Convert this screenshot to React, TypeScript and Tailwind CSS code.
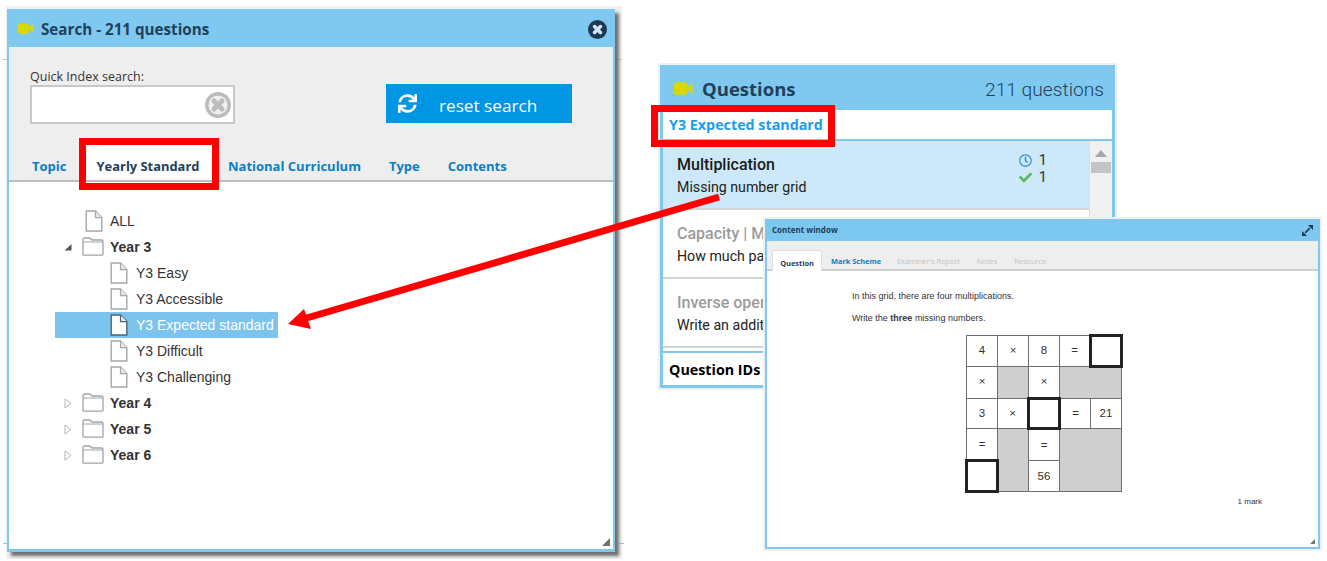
import React from "react";
import { FaSync, FaRegClock, FaCheck } from "react-icons/fa";

const OS = "font-['Open_Sans',sans-serif]";
const RB = "font-['Roboto',sans-serif]";
const LS = "font-['Liberation_Sans',Arial,sans-serif]";

function Camera({ className }: { className: string }) {
  return (
    <svg viewBox="0 0 18 12" className={className} aria-hidden="true">
      <rect x="0" y="0" width="12.5" height="12" rx="2.5" fill="#d9d900" />
      <path d="M13.4 4.6 17.6 0.8V11.2L13.4 7.4Z" fill="#d9d900" />
    </svg>
  );
}

function CircleX({ size, ring, fill, mark }: { size: number; ring: string; fill: string; mark: string }) {
  return (
    <svg width={size} height={size} viewBox="0 0 26 26" aria-hidden="true">
      <circle cx="13" cy="13" r="13" fill={ring} />
      <circle cx="13" cy="13" r="9.5" fill={fill} />
      <path d="M9 9 17 17M17 9 9 17" stroke={mark} strokeWidth="5" strokeLinecap="round" />
    </svg>
  );
}

function FileIcon({ selected = false }: { selected?: boolean }) {
  const c = selected ? "#4d6478" : "#a4a8ac";
  return (
    <svg width="18" height="22" viewBox="0 0 18 22" aria-hidden="true" className="shrink-0">
      <path d="M1.2 1H10.5L16.8 7.6V21H1.2Z" fill="#ffffff" stroke={c} strokeWidth="1.4" />
      <path d="M10.5 1V7.6H16.8" fill="#e8e8e8" stroke={c} strokeWidth="1.2" />
    </svg>
  );
}

function FolderIcon() {
  return (
    <svg width="22" height="19" viewBox="0 0 22 19" aria-hidden="true" className="shrink-0">
      <path d="M1 17.2V2.4Q1 1 2.4 1H8L10 3H19.6Q21 3 21 4.4V17.2Q21 18.2 20 18.2H2Q1 18.2 1 17.2Z" fill="#fff" stroke="#a0a4a8" strokeWidth="1.3" />
      <path d="M1 5H21" stroke="#a0a4a8" strokeWidth="1" />
    </svg>
  );
}

function Grip({ className }: { className: string }) {
  return (
    <svg viewBox="0 0 8 8" className={className} aria-hidden="true">
      <path d="M8 0V8H0Z" fill="#707070" />
    </svg>
  );
}

type Row = { label: string; bold?: boolean; indent: number; arrow?: "open" | "closed"; selected?: boolean };

function TreeRow({ label, bold, indent, selected }: Row) {
  const pad = indent === 0 ? "pl-[30px]" : "pl-[55px]";
  return (
    <div className={`flex h-[26px] items-center ${pad} pr-[4px] ${selected ? "bg-[#7cc4ee] text-white" : "text-[#333333]"} ${bold ? "font-bold text-[#222222]" : ""}`}>
      {bold ? (
        <span className="-ml-[3px] mr-[6px] -mt-[1px]"><FolderIcon /></span>
      ) : (
        <span className={indent === 0 ? "mr-[7px]" : "mr-[8px]"}><FileIcon selected={selected} /></span>
      )}
      <span className={`${LS} text-[14px] leading-none whitespace-nowrap`}>{label}</span>
    </div>
  );
}

function SearchWindow() {
  const tree: Row[] = [
    { label: "ALL", indent: 0 },
    { label: "Year 3", bold: true, indent: 0, arrow: "open" },
    { label: "Y3 Easy", indent: 1 },
    { label: "Y3 Accessible", indent: 1 },
    { label: "Y3 Expected standard", indent: 1, selected: true },
    { label: "Y3 Difficult", indent: 1 },
    { label: "Y3 Challenging", indent: 1 },
    { label: "Year 4", bold: true, indent: 0, arrow: "closed" },
    { label: "Year 5", bold: true, indent: 0, arrow: "closed" },
    { label: "Year 6", bold: true, indent: 0, arrow: "closed" },
  ];
  return (
    <div className={`absolute left-[7px] top-[9px] w-[608px] h-[543px] flex flex-col bg-white border-x-[2px] border-b-[3px] border-[#7fc8f0] shadow-[4px_4px_3px_#707070] ${OS}`}>
      <div className="-mx-[2px] h-[38px] shrink-0 bg-[#7fc9f0] flex items-center pl-[11px] pr-[8px]">
        <Camera className="w-[16px] h-[11px] mr-[7px]" />
        <span className="text-[15.2px] font-bold text-[#22405a] leading-none pt-[3px]">Search - 211 questions</span>
        <span className="ml-auto mt-[3px] flex"><CircleX size={19} ring="#1f3a55" fill="#1f3a55" mark="#cfe6f4" /></span>
      </div>
      <div className="h-[135px] shrink-0 bg-[#eeeeee] border-b-[2px] border-[#bdbdbd] relative flex flex-col">
        <div className="flex pl-[21px] pt-[21px]">
          <div className="w-[205px]">
            <div className="text-[12.5px] text-[#333333] leading-[17px] h-[17px]">Quick Index search:</div>
            <div className="h-[39px] bg-white border-[2px] border-[#c8c8c8] flex items-center justify-end pr-[2px]">
              <CircleX size={26} ring="#bcbcbc" fill="#f0f0f0" mark="#bcbcbc" />
            </div>
          </div>
          <div className="ml-[151px] mt-[16px] w-[186px] h-[39px] bg-[#0096e4] flex items-center text-white">
            <FaSync className="ml-[12px] text-[19px]" />
            <span className="ml-[22px] text-[17.2px] leading-none pt-[4px]">reset search</span>
          </div>
        </div>
        <div className="mt-auto flex items-end text-[13px] font-bold text-[#0a7fc4] pl-[23px] h-[36px]">
          <div className="h-[36px] flex items-center pt-[9px] w-[54px]">Topic</div>
          <div className="h-[36px] w-[126px] bg-white flex items-center justify-center pt-[9px] pr-[2px] text-[12.9px] text-[#22405a]">Yearly Standard</div>
          <div className="h-[36px] flex items-center pt-[9px] ml-[16px]">National Curriculum</div>
          <div className="h-[36px] flex items-center pt-[9px] ml-[28px]">Type</div>
          <div className="h-[36px] flex items-center pt-[9px] ml-[28px]">Contents</div>
        </div>
      </div>
      <div className="flex-1 relative pl-[46px] pt-[26px]">
        {tree.map((r) => (
          <div key={r.label} className="relative flex items-center">
            {r.arrow === "open" ? (
              <span className="absolute left-[9px] top-[9px] flex">
                <svg width="8" height="8" viewBox="0 0 8 8" aria-hidden="true"><path d="M7.5 1V7.5H0.5Z" fill="#555" /></svg>
              </span>
            ) : null}
            {r.arrow === "closed" ? (
              <span className="absolute left-[9px] top-[8px] flex">
                <svg width="8" height="11" viewBox="0 0 8 11" aria-hidden="true"><path d="M1 1 7 5.5 1 10Z" fill="#fff" stroke="#b5b5b5" /></svg>
              </span>
            ) : null}
            <TreeRow {...r} />
          </div>
        ))}
        <Grip className="absolute right-[3px] bottom-[3px] w-[8px] h-[8px]" />
      </div>
    </div>
  );
}

function QRow({ title, sub, active }: { title: string; sub: string; active?: boolean }) {
  return (
    <div className={`h-[69px] border-b-[2px] border-[#d4d4d4] pl-[14px] pt-[14px] ${RB} ${active ? "bg-[#cce8f9]" : "bg-white"}`}>
      <div className="flex">
        <div>
          <div className={`text-[16px] leading-[20px] font-medium ${active ? "text-[#1a1a1a]" : "text-[#9a9a9a]"}`}>{title}</div>
          <div className="text-[14.2px] leading-[20px] mt-[2px] text-[#222222]">{sub}</div>
        </div>
        {active ? (
          <div className="ml-auto mr-[42px] text-[14.5px] leading-[17px] text-[#333333] -mt-[3px]">
            <div className="flex items-center gap-[7px]"><FaRegClock className="text-[#2f8fd0] text-[13px]" /><span>1</span></div>
            <div className="flex items-center gap-[7px]"><FaCheck className="text-[#5cb85c] text-[13px]" /><span>1</span></div>
          </div>
        ) : null}
      </div>
    </div>
  );
}

function QuestionsWindow() {
  return (
    <div className="absolute left-[660px] top-[65px] w-[455px] h-[323px] flex flex-col bg-white border-x-[3px] border-b-[3px] border-[#7fc8f0] shadow-[0_0_0_2px_#f0f0f0]">
      <div className="-mx-[3px] h-[45px] shrink-0 bg-[#7fc9f0] flex items-center pl-[14px] pr-[11px] pt-[4px]">
        <Camera className="w-[19px] h-[13px] mr-[9px] -mt-[3px]" />
        <span className={`${OS} text-[18.5px] font-bold text-[#22405a] leading-none`}>Questions</span>
        <span className={`${RB} ml-auto text-[19.2px] font-light text-[#22405a] leading-none`}>211 questions</span>
      </div>
      <div className={`${OS} h-[31px] shrink-0 flex items-center pl-[6px] text-[14.3px] font-bold text-[#1b9cec] border-b-[2px] border-[#7fc8f0]`}>Y3 Expected standard</div>
      <div className="flex flex-1 min-h-0">
        <div className="flex-1 overflow-hidden">
          <QRow active title="Multiplication" sub="Missing number grid" />
          <QRow title="Capacity | M" sub="How much pa" />
          <QRow title="Inverse oper" sub="Write an addit" />
        </div>
        <div className="w-[23px] shrink-0 bg-[#f0f0f0] border-l border-[#dddddd] flex flex-col items-center pt-[9px]">
          <svg width="12" height="7" viewBox="0 0 12 7" aria-hidden="true"><path d="M6 0 12 7H0Z" fill="#a8a8a8" /></svg>
          <div className="mt-[5px] w-[20px] h-[11px] bg-[#c4c4c4]" />
        </div>
      </div>
      <div className={`${OS} -mx-[3px] h-[34px] shrink-0 border-x-[3px] border-t-[2px] border-[#7fc8f0] pl-[6px] pt-[2px] flex items-center text-[14.3px] font-bold text-black`}>Question IDs</div>
    </div>
  );
}

function Cell({ children, bold, gray, rowSpan, colSpan }: { children?: React.ReactNode; bold?: boolean; gray?: boolean; rowSpan?: number; colSpan?: number }) {
  return (
    <td
      rowSpan={rowSpan}
      colSpan={colSpan}
      className={`p-0 text-center align-middle ${bold ? "border-[3px] border-[#222222]" : "border border-[#6e6e6e]"} ${gray ? "bg-[#cfcfcf]" : "bg-white"}`}
    >
      {children}
    </td>
  );
}

function ContentWindow() {
  return (
    <div className={`absolute left-[765px] top-[219px] w-[555px] h-[330px] flex flex-col bg-white border-x-[2px] border-b-[2px] border-[#7fc8f0] shadow-[0_0_0_2px_#f0f0f0] ${LS}`}>
      <div className="-mx-[2px] h-[22px] shrink-0 bg-[#7cc8f0] flex items-center pl-[7px] pr-[7px]">
        <span className={`${OS} text-[8px] font-bold text-[#22405a] leading-none`}>Content window</span>
        <svg viewBox="0 0 12 12" className="ml-auto w-[11px] h-[11px]" aria-hidden="true">
          <path d="M6.5 0H12V5.5ZM5.5 12H0V6.5Z" fill="#1f3a55" />
          <path d="M3.5 8.5 8.5 3.5" stroke="#1f3a55" strokeWidth="1.8" />
        </svg>
      </div>
      <div className={`${OS} h-[30px] shrink-0 bg-[#eeeeee] border-b-[2px] border-[#cfcfcf] flex items-end pl-[5px] text-[7.4px] font-bold leading-none`}>
        <div className="h-[21px] w-[50px] -mb-[2px] bg-white border-t border-x border-[#dddddd] rounded-t-[2px] flex items-center justify-center pt-[6px] text-[#22405a]">Question</div>
        <div className="h-[21px] flex items-center ml-[9px] pt-[7px] text-[#0a7fc4]">Mark Scheme</div>
        <div className="h-[21px] flex items-center ml-[16px] pt-[7px] text-[#c4c4c4] font-normal">Examiner's Report</div>
        <div className="h-[21px] flex items-center ml-[17px] pt-[7px] text-[#c4c4c4] font-normal">Notes</div>
        <div className="h-[21px] flex items-center ml-[17px] pt-[7px] text-[#c4c4c4] font-normal">Resource</div>
      </div>
      <div className="relative flex-1">
        <div className="pl-[85px] pt-[19px] text-[9px] leading-[12px] text-[#333333]">
          <p>In this grid, there are four multiplications.</p>
          <p className="mt-[10px]">Write the <b>three</b> missing numbers.</p>
        </div>
        <table className="ml-[198px] mt-[10px] w-[158px] h-[159px] table-fixed border-collapse text-[11.5px] text-[#333333]">
          <tbody>
            <tr><Cell>4</Cell><Cell>×</Cell><Cell>8</Cell><Cell>=</Cell><Cell bold /></tr>
            <tr><Cell>×</Cell><Cell gray /><Cell>×</Cell><Cell gray colSpan={2} /></tr>
            <tr><Cell>3</Cell><Cell>×</Cell><Cell bold /><Cell>=</Cell><Cell>21</Cell></tr>
            <tr><Cell>=</Cell><Cell gray rowSpan={2} /><Cell>=</Cell><Cell gray rowSpan={2} colSpan={2} /></tr>
            <tr><Cell bold /><Cell>56</Cell></tr>
          </tbody>
        </table>
        <div className="flex justify-end pr-[56px] mt-[4px] text-[8px] text-[#333333] leading-[10px]">1 mark</div>
        <Grip className="absolute right-[3px] bottom-[3px] w-[5px] h-[5px]" />
      </div>
    </div>
  );
}

function Overlays() {
  return (
    <>
      <div className="absolute left-[79px] top-[138px] w-[140px] h-[52px] border-[7px] border-[#ff0000]" />
      <div className="absolute left-[651px] top-[105px] w-[184px] h-[42px] border-[7px] border-[#ff0000]" />
      <svg className="absolute left-0 top-0 w-[1327px] h-[561px] pointer-events-none" viewBox="0 0 1327 561" aria-hidden="true">
        <path d="M719 197 305 318.5" stroke="#ff0000" strokeWidth="7" fill="none" />
        <path d="M288 324 304 309 311 329Z" fill="#ff0000" />
      </svg>
    </>
  );
}

export default function App() {
  return (
    <div className="relative w-[1327px] h-[561px] overflow-hidden bg-white">
      <div className="absolute left-[6px] top-[6px] w-[616px] h-[553px] bg-[#f0f0f0]" />
      <div className="absolute left-[3px] top-[59px] w-[4px] h-px bg-[#c8c8c8]" />
      <div className="absolute left-[615px] top-[59px] w-[7px] h-px bg-[#c8c8c8]" />
      <div className="absolute left-[3px] top-[543px] w-[5px] h-px bg-[#7fc8f0]" />
      <div className="absolute left-[619px] top-[543px] w-[5px] h-px bg-[#7fc8f0]" />
      <SearchWindow />
      <QuestionsWindow />
      <ContentWindow />
      <Overlays />
    </div>
  );
}
